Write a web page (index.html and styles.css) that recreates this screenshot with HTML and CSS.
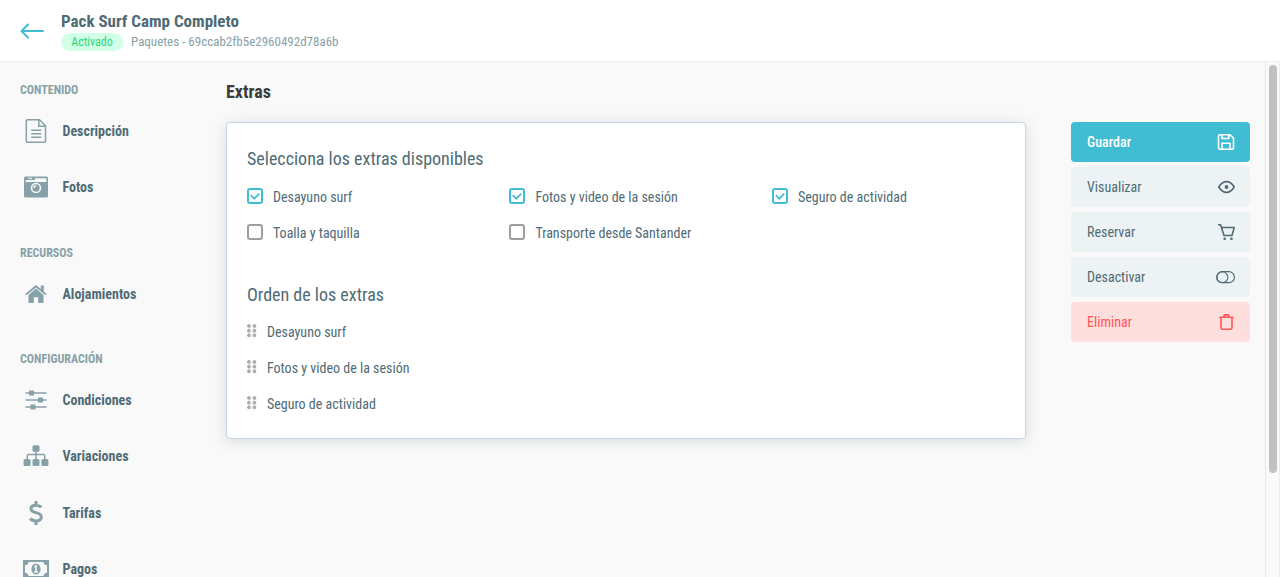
FILE: index.html
```
<!DOCTYPE html>
<html lang="es">

	<head>
		<meta charset="utf-8">
		<title>Pack Surf Camp Completo</title>
		<link rel="stylesheet" href="styles.css">
	</head>

	<body>
		<header class="header">
			<a class="back" href="#">
				<svg width="24" height="16" viewBox="0 0 24 16"><path d="M23 8H1.5M8 1.5L1.5 8L8 14.5" /></svg>
			</a>
			<div class="heading">
				<h1>Pack Surf Camp Completo</h1>
				<div class="meta">
					<span class="badge">Activado</span>
					<span class="path">Paquetes - 69ccab2fb5e2960492d78a6b</span>
				</div>
			</div>
		</header>

		<div class="wrap">
			<nav class="sidebar">
				<h3>CONTENIDO</h3>
				<ul>
					<li>
						<svg width="26" height="26" viewBox="0 0 26 26"><path class="line" d="M4 1.800h12.500l6 6v15.400q0 1-1 1H4.300q-1 0-1-1V2.800q0-1 1-1zM15.800 2v6.200h6.500M8.300 12.300h10M8.300 15.800h10M8.300 19.300h10" /></svg>
						<span>Descripción</span>
					</li>
					<li>
						<svg width="26" height="26" viewBox="0 0 26 26"><path fill-rule="evenodd" d="M2.500 2.500h21q1.500 0 1.500 1.500v18q0 1.500-1.500 1.500h-21Q1 23.500 1 22V4q0-1.500 1.500-1.500zM2.600 5.900v2h20.800V4.200H12v1.700zM5 3.800v1h4v-1zM13 8.700a5.200 5.200 0 1 0 .01 0z" /><circle cx="13" cy="14" r="3.700" /><path class="one" d="M10.800 14q.2-2 2.200-2.200" /></svg>
						<span>Fotos</span>
					</li>
				</ul>
				<h3>RECURSOS</h3>
				<ul>
					<li>
						<svg width="26" height="26" viewBox="0 0 26 26"><path d="M13 7.600l7.500 6.300v7q0 1-1 1h-4.300v-5.600h-4.400v5.600H6.500q-1 0-1-1v-7z" /><path d="M13 4l4.800 4V4.600h3v6L23.700 13l-1.200 1.300L13 6.400l-9.500 7.900L2.300 13 11.600 5.100Q13 4 13 4z" /></svg>
						<span>Alojamientos</span>
					</li>
				</ul>
				<h3>CONFIGURACIÓN</h3>
				<ul>
					<li>
						<svg width="26" height="26" viewBox="0 0 26 26"><path class="line" d="M2.500 6h21M2.500 13h21M2.500 20h21" /><path d="M6 3.500h5v5H6zM15 10.500h5v5h-5zM7.500 17.500h5v5h-5z" /></svg>
						<span>Condiciones</span>
					</li>
					<li>
						<svg width="26" height="26" viewBox="0 0 26 26"><path class="line" d="M13 8v8M4.300 16v-3.500q0-1 1-1h15.400q1 0 1 1V16" /><rect x="9.500" y="2.200" width="7" height="6.600" rx="1.500" /><rect x=".6" y="16" width="7" height="7" rx="1.500" /><rect x="9.500" y="16" width="7" height="7" rx="1.500" /><rect x="18.400" y="16" width="7" height="7" rx="1.500" /></svg>
						<span>Variaciones</span>
					</li>
					<li>
						<svg width="26" height="26" viewBox="0 0 26 26"><path class="thick" d="M18.300 7.300Q16.500 5.200 13 5.200C9.500 5.200 8 6.800 8 8.800C8 14 18.300 11.300 18.300 17C18.300 19.300 16.500 20.900 13 20.900Q9 20.900 7.200 18.500M13 1v4M13 21v4" /></svg>
						<span>Tarifas</span>
					</li>
					<li>
						<svg width="26" height="26" viewBox="0 0 26 26"><path fill-rule="evenodd" d="M0 4h26v18H0zM5.500 5.900Q5.200 9 2 9.300v7.400Q5.200 17 5.500 20.100h15Q20.800 17 24 16.700V9.300Q20.800 9 20.500 5.900z" /><ellipse cx="13" cy="13" rx="4.600" ry="5.600" /><path class="one" d="M11.200 11l1.800-1.300v6.200M11 16h4" /></svg>
						<span>Pagos</span>
					</li>
				</ul>
			</nav>

			<main class="main">
				<h2>Extras</h2>
				<section class="card">
					<h4>Selecciona los extras disponibles</h4>
					<div class="options">
						<div class="option"><i class="check on"><svg width="10" height="8" viewBox="0 0 10 8"><path d="M.8 3.200l3.500 3.500L9.300 1.700" /></svg></i><span>Desayuno surf</span></div>
						<div class="option"><i class="check on"><svg width="10" height="8" viewBox="0 0 10 8"><path d="M.8 3.200l3.500 3.500L9.300 1.700" /></svg></i><span>Fotos y video de la sesión</span></div>
						<div class="option"><i class="check on"><svg width="10" height="8" viewBox="0 0 10 8"><path d="M.8 3.200l3.500 3.500L9.300 1.700" /></svg></i><span>Seguro de actividad</span></div>
						<div class="option"><i class="check"></i><span>Toalla y taquilla</span></div>
						<div class="option"><i class="check"></i><span>Transporte desde Santander</span></div>
					</div>
					<h4>Orden de los extras</h4>
					<ul class="order">
						<li><i class="grip"></i><span>Desayuno surf</span></li>
						<li><i class="grip"></i><span>Fotos y video de la sesión</span></li>
						<li><i class="grip"></i><span>Seguro de actividad</span></li>
					</ul>
				</section>
			</main>

			<aside class="actions">
				<a class="btn primary" href="#"><span>Guardar</span>
					<svg width="20" height="20" viewBox="0 0 20 20"><path d="M4.500 2.800H14L17.500 6v9.700q0 1.500-1.500 1.500H4q-1.500 0-1.500-1.500v-11.400q0-1.500 1.500-1.500zM6 3v3.500h6.800V3M6 17v-5.800h8V17" /></svg>
				</a>
				<a class="btn" href="#"><span>Visualizar</span>
					<svg width="20" height="20" viewBox="0 0 20 20"><path d="M2.800 10Q6 4.600 10.500 4.600T18.200 10Q15 15.400 10.500 15.400T2.800 10z" /><circle class="dot" cx="10.500" cy="10" r="1.900" /></svg>
				</a>
				<a class="btn" href="#"><span>Reservar</span>
					<svg width="20" height="20" viewBox="0 0 20 20"><path d="M2 2.800h2.600L8 13.500h8L18.200 5.500H5.600" /><circle class="dot" cx="8.700" cy="16.800" r="1.300" /><circle class="dot" cx="15.500" cy="16.800" r="1.300" /></svg>
				</a>
				<a class="btn" href="#"><span>Desactivar</span>
					<svg class="thin" width="20" height="20" viewBox="0 0 20 20"><rect x=".8" y="4.700" width="17.600" height="11" rx="5.500" /><circle cx="6.300" cy="10.200" r="5.500" /></svg>
				</a>
				<a class="btn danger" href="#"><span>Eliminar</span>
					<svg width="20" height="20" viewBox="0 0 20 20"><path d="M3.400 5.300h14.200M5 5.500v10.200q0 1.600 1.600 1.600h7.800q1.600 0 1.600-1.600V5.500M8 5V3.700q0-.8.800-.8h3.400q.8 0 .8.800V5" /></svg>
				</a>
			</aside>
			<div class="scrollbar"><div class="thumb"></div></div>
		</div>
	</body>

</html>
```
FILE: styles.css
```
* {
	margin: 0;
	padding: 0;
	box-sizing: border-box;
}

body {
	height: 100vh;
	overflow: hidden;
	display: flex;
	flex-direction: column;
	background: #f9f9f9;
	color: #4f6b75;
	font-family: "Roboto Condensed", Roboto, sans-serif;
	font-stretch: 75%;
	font-size: 14px;
	line-height: 20px;
	white-space: nowrap;
}

ul {
	list-style: none;
}

a {
	color: inherit;
	text-decoration: none;
}

svg {
	display: block;
	flex: none;
}

.header {
	height: 62px;
	flex: none;
	display: flex;
	background: #fff;
	border-bottom: 1px solid #eee;
}

.back {
	width: 61px;
	padding: 23px 0 0 20px;
}

.back svg {
	fill: none;
	stroke: #40bdd3;
	stroke-width: 2;
	stroke-linecap: round;
	stroke-linejoin: round;
}

.heading {
	padding-top: 10px;
}

.heading h1 {
	font-size: 17px;
	line-height: 22px;
}

.meta {
	display: flex;
	align-items: center;
	gap: 8px;
	height: 19px;
	color: #87a1a8;
	font-size: 13px;
}

.badge {
	width: 62px;
	height: 18px;
	font-size: 12px;
	line-height: 18px;
	text-align: center;
	border-radius: 9px;
	background: #d1ffe8;
	color: #2bd67b;
}

.wrap {
	flex: 1;
	min-height: 0;
	display: flex;
}

.sidebar {
	width: 226px;
	flex: none;
	padding: 18px 0 0 20px;
	overflow: hidden;
}

.sidebar h3 {
	font-size: 12px;
	line-height: 20px;
	color: #87a1a8;
}

.sidebar ul {
	padding: 3px 0 27px 2.5px;
}

.sidebar li {
	display: flex;
	align-items: center;
	gap: 14px;
	height: 56.3px;
	font-weight: bold;
}

.sidebar svg {
	fill: #87a1a8;
}

.sidebar .line,
.sidebar .thick {
	fill: none;
	stroke: #87a1a8;
	stroke-width: 1.5;
	stroke-linejoin: round;
}

.sidebar .thick {
	stroke-width: 3;
}

.sidebar .one {
	fill: none;
	stroke: #f9f9f9;
	stroke-width: 1.5;
}

.main {
	width: 800px;
	flex: none;
	padding-top: 18px;
}

.main h2 {
	font-size: 18px;
	line-height: 24px;
	color: #3c3c3c;
}

.card {
	height: 317px;
	margin-top: 18px;
	padding: 24px 20px 0;
	background: #fff;
	border: 1px solid #cbd5e1;
	border-radius: 4px;
	box-shadow: 0 2px 14px rgba(79, 107, 117, .2);
}

.card h4 {
	font-size: 18px;
	font-weight: normal;
	line-height: 24px;
}

.options {
	display: grid;
	grid-template-columns: 262.4px 262.6px 1fr;
	grid-auto-rows: 36px;
	padding: 8px 0 32px;
}

.option {
	display: flex;
	align-items: center;
	gap: 10px;
}

.check {
	display: flex;
	align-items: center;
	justify-content: center;
	width: 16px;
	height: 16px;
	margin-top: -2px;
	border: 2px solid #9e9e9e;
	border-radius: 3px;
}

.check.on {
	border-color: #40bdd3;
}

.check svg {
	fill: none;
	stroke: #40bdd3;
	stroke-width: 1.7;
}

.order {
	padding-top: 7px;
}

.order li {
	display: flex;
	align-items: center;
	gap: 10px;
	height: 36px;
}

.grip {
	width: 10px;
	height: 14px;
	margin-top: -3px;
	background: radial-gradient(circle at 2px 2px, #aaa 1.6px, transparent 2.1px) 0 0 / 5.5px 4.7px;
}

.actions {
	width: 179px;
	flex: none;
	display: flex;
	flex-direction: column;
	gap: 5px;
	margin: 60px 15px 0 45px;
}

.btn {
	display: flex;
	align-items: center;
	justify-content: space-between;
	height: 40px;
	padding: 0 14px 0 16px;
	border-radius: 4px;
	background: #edf2f5;
}

.btn svg {
	fill: none;
	stroke: currentColor;
	stroke-width: 1.6;
	stroke-linejoin: round;
}

.btn .thin {
	stroke-width: 1.2;
}

.btn .dot {
	fill: currentColor;
	stroke: none;
}

.btn.primary {
	background: #40bdd3;
	color: #fff;
	font-weight: 500;
}

.btn.danger {
	background: #ffdede;
	color: #ff5558;
}

.scrollbar {
	width: 15px;
	flex: none;
	padding: 3px 3px 0;
	background: #fafafa;
	border-left: 1px solid #e8e8e8;
	border-right: 1px solid #ededed;
}

.thumb {
	width: 8px;
	height: 408px;
	border-radius: 4px;
	background: #c1c1c1;
}
```
